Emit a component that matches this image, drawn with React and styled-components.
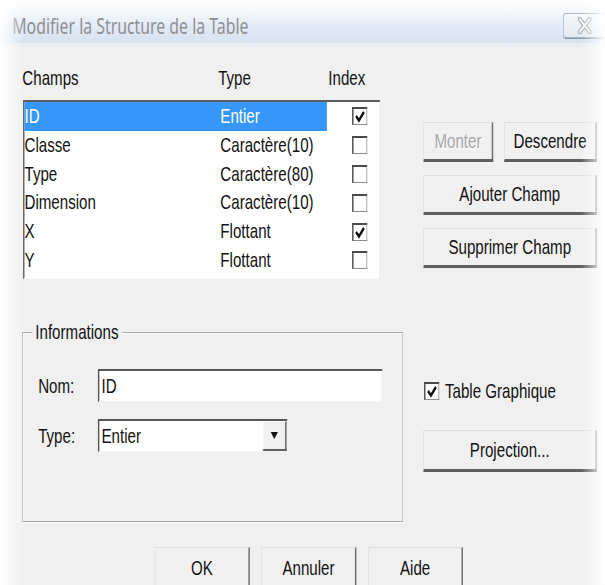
import styled, { createGlobalStyle } from "styled-components";

// the dialog is laid out wide and squeezed horizontally, like the old stretched capture
const SQUASH = 0.72;

const GlobalStyle = createGlobalStyle`
  html, body {
    margin: 0;
    padding: 0;
    background: #fff;
    overflow: hidden;
  }
`;

const Page = styled.div`
  position: relative;
  width: 605px;
  height: 585px;
  overflow: hidden;
  background: #f0f0f0;
`;

const Dialog = styled.div`
  width: ${605 / SQUASH}px;
  transform: scaleX(${SQUASH});
  transform-origin: 0 0;
  font-family: "Liberation Sans", Arial, sans-serif;
  font-size: 21px;
  color: #121212;
`;

const EdgeFade = styled.div`
  position: absolute;
  top: 0;
  bottom: 0;
  width: 24px;
  pointer-events: none;
  ${(p) => (p.$side === "left" ? "left: 0;" : "right: 0;")}
  background: linear-gradient(
    ${(p) => (p.$side === "left" ? "to right" : "to left")},
    rgba(255, 255, 255, 0.95),
    rgba(255, 255, 255, 0)
  );
`;

const TitleBar = styled.div`
  height: 43px;
  display: flex;
  justify-content: space-between;
  align-items: flex-start;
  background: linear-gradient(#ffffff 0%, #f6f9fc 25%, #e2eaf4 62%, #d5e2ef 100%);
`;

const Title = styled.div`
  padding: 11px 0 0 17px;
  font-family: "Noto Sans", "Open Sans", sans-serif;
  font-size: 22px;
  line-height: 28px;
  color: #8e9093;
`;

const CloseButton = styled.div`
  margin-top: 13px;
  width: 58px;
  height: 25px;
  box-sizing: border-box;
  display: flex;
  align-items: center;
  justify-content: center;
  border: 1px solid #aab6c3;
  border-right: none;
  border-radius: 4px 0 0 4px;
  background: linear-gradient(#f6f8fb, #e2e9f1);
  box-shadow: 0 1px 0 #8b97a5;
`;

const Body = styled.div`
  padding: 23px 11px 0 31px;
  background: linear-gradient(#e8edf2, #f0f0f0 8px);
`;

const TopSection = styled.div`
  display: flex;
  gap: 60px;
`;

const TableColumn = styled.div`
  width: 497px;
`;

const HeaderRow = styled.div`
  display: grid;
  grid-template-columns: 272px 153px 1fr;
  height: 24px;
  line-height: 24px;
`;

const List = styled.div`
  margin-top: 10px;
  margin-left: 1px;
  height: 179px;
  box-sizing: border-box;
  background: #fff;
  border-style: solid;
  border-width: 2px 1px 1px 2px;
  border-color: #5e5e5e #e4e4e4 #fafafa #5e5e5e;
`;

const Row = styled.div`
  display: grid;
  grid-template-columns: 420px 1fr;
  height: 28.8px;
  align-items: center;
`;

const RowFields = styled.div`
  display: grid;
  grid-template-columns: 272px 1fr;
  height: 100%;
  align-items: center;
  background: ${(p) => (p.$selected ? "#3597f8" : "transparent")};
  color: ${(p) => (p.$selected ? "#fff" : "#121212")};
  line-height: 28.8px;
`;

const CheckCell = styled.div`
  padding-left: 35px;
  display: flex;
  align-items: center;
`;

const Box = styled.span`
  width: 21px;
  height: 18px;
  box-sizing: border-box;
  display: inline-flex;
  align-items: center;
  justify-content: center;
  background: #fff;
  border-style: solid;
  border-width: 2px 1px 1px 2px;
  border-color: #4a4a4a #8a8a8a #8a8a8a #4a4a4a;
`;

const Check = ({ on }) => (
  <Box>
    {on && (
      <svg width="16" height="13" viewBox="0 0 16 13">
        <path d="M2.5 6 L6.5 10.5 L13.5 2" fill="none" stroke="#111" strokeWidth="3" />
      </svg>
    )}
  </Box>
);

const SideColumn = styled.div`
  width: 241px;
  padding-top: ${(p) => p.$top}px;
  display: flex;
  flex-direction: column;
  gap: 13px;
`;

const ButtonPair = styled.div`
  display: flex;
  gap: 15px;
`;

const Button = styled.div`
  height: ${(p) => p.$h || 40}px;
  width: ${(p) => (p.$w ? `${p.$w}px` : "auto")};
  flex: ${(p) => (p.$grow ? 1 : "none")};
  box-sizing: border-box;
  display: flex;
  align-items: center;
  justify-content: center;
  background: #f0f0f0;
  border-style: solid;
  border-width: 1px 2px 3px 1px;
  border-color: #dedede #6c6c6c #5f5f5f #dedede;
  color: ${(p) => (p.$disabled ? "#a6a6a6" : "#121212")};
  text-shadow: ${(p) => (p.$disabled ? "1px 1px 0 #fff" : "none")};
`;

const MidSection = styled.div`
  margin-top: 41px;
  display: flex;
  gap: 28px;
`;

const Group = styled.div`
  width: 529px;
  height: 190px;
  margin-top: 12px;
  box-sizing: border-box;
  border: 1px solid #a9a9a9;
  box-shadow: inset 1px 1px 0 #fff, 1px 1px 0 #fff;
  padding-left: 21px;
`;

const GroupHead = styled.div`
  margin: -13px 0 0 -8px;
  height: 24px;
  line-height: 24px;
`;

const Legend = styled.span`
  display: inline-block;
  padding: 0 4px;
  background: #f0f0f0;
`;

const Fields = styled.div`
  padding-top: 25px;
  display: flex;
  flex-direction: column;
  gap: 17px;
`;

const Field = styled.div`
  display: flex;
  align-items: center;
  height: 33px;
`;

const FieldLabel = styled.span`
  width: 83px;
`;

const TextBox = styled.div`
  width: ${(p) => p.$w}px;
  height: 100%;
  box-sizing: border-box;
  display: flex;
  align-items: center;
  padding-left: 3px;
  background: #fff;
  border-style: solid;
  border-width: 2px 1px 1px 2px;
  border-color: #585858 #e6e6e6 #f4f4f4 #585858;
`;

const SelectValue = styled.span`
  flex: 1;
`;

const DropButton = styled.span`
  width: 33px;
  height: 100%;
  box-sizing: border-box;
  display: flex;
  align-items: center;
  justify-content: center;
  background: #f0f0f0;
  border-style: solid;
  border-width: 1px 2px 2px 1px;
  border-color: #fff #5f5f5f #5f5f5f #fff;
`;

const CheckRow = styled.div`
  display: flex;
  align-items: center;
  gap: 8px;
  height: 24px;
  padding-left: 1px;
  margin-bottom: 14px;
`;

const BottomBar = styled.div`
  margin-top: 25px;
  padding-left: 184px;
  display: flex;
  gap: 16px;
`;

const CloseGlyph = () => (
  <svg width="24" height="17" viewBox="0 0 24 17">
    <path d="M5 2 L19 15 M19 2 L5 15" stroke="#9aa0a7" strokeWidth="5" strokeLinecap="round" />
    <path d="M5 2 L19 15 M19 2 L5 15" stroke="#f4f6f8" strokeWidth="2.6" strokeLinecap="round" />
  </svg>
);

const fields = [
  { name: "ID", type: "Entier", index: true },
  { name: "Classe", type: "Caractère(10)", index: false },
  { name: "Type", type: "Caractère(80)", index: false },
  { name: "Dimension", type: "Caractère(10)", index: false },
  { name: "X", type: "Flottant", index: true },
  { name: "Y", type: "Flottant", index: false },
];

export default function App() {
  return (
    <>
      <GlobalStyle />
      <Page>
        <Dialog>
          <TitleBar>
            <Title>Modifier la Structure de la Table</Title>
            <CloseButton>
              <CloseGlyph />
            </CloseButton>
          </TitleBar>

          <Body>
            <TopSection>
              <TableColumn>
                <HeaderRow>
                  <span>Champs</span>
                  <span>Type</span>
                  <span>Index</span>
                </HeaderRow>
                <List>
                  {fields.map((f, i) => (
                    <Row key={f.name}>
                      <RowFields $selected={i === 0}>
                        <span>{f.name}</span>
                        <span>{f.type}</span>
                      </RowFields>
                      <CheckCell>
                        <Check on={f.index} />
                      </CheckCell>
                    </Row>
                  ))}
                </List>
              </TableColumn>

              <SideColumn $top={56}>
                <ButtonPair>
                  <Button $w={97} $disabled>Monter</Button>
                  <Button $grow>Descendre</Button>
                </ButtonPair>
                <Button>Ajouter Champ</Button>
                <Button>Supprimer Champ</Button>
              </SideColumn>
            </TopSection>

            <MidSection>
              <Group>
                <GroupHead>
                  <Legend>Informations</Legend>
                </GroupHead>
                <Fields>
                  <Field>
                    <FieldLabel>Nom:</FieldLabel>
                    <TextBox $w={395}>ID</TextBox>
                  </Field>
                  <Field>
                    <FieldLabel>Type:</FieldLabel>
                    <TextBox $w={263}>
                      <SelectValue>Entier</SelectValue>
                      <DropButton>
                        <svg width="14" height="9" viewBox="0 0 14 9">
                          <path d="M2 1 L12 1 L7 8 Z" fill="#111" />
                        </svg>
                      </DropButton>
                    </TextBox>
                  </Field>
                </Fields>
              </Group>

              <SideColumn $top={59}>
                <CheckRow>
                  <Check on />
                  <span>Table Graphique</span>
                </CheckRow>
                <Button $h={42}>Projection...</Button>
              </SideColumn>
            </MidSection>

            <BottomBar>
              <Button $w={132} $h={43}>OK</Button>
              <Button $w={132} $h={43}>Annuler</Button>
              <Button $w={132} $h={43}>Aide</Button>
            </BottomBar>
          </Body>
        </Dialog>
        <EdgeFade $side="left" />
        <EdgeFade $side="right" />
      </Page>
    </>
  );
}
